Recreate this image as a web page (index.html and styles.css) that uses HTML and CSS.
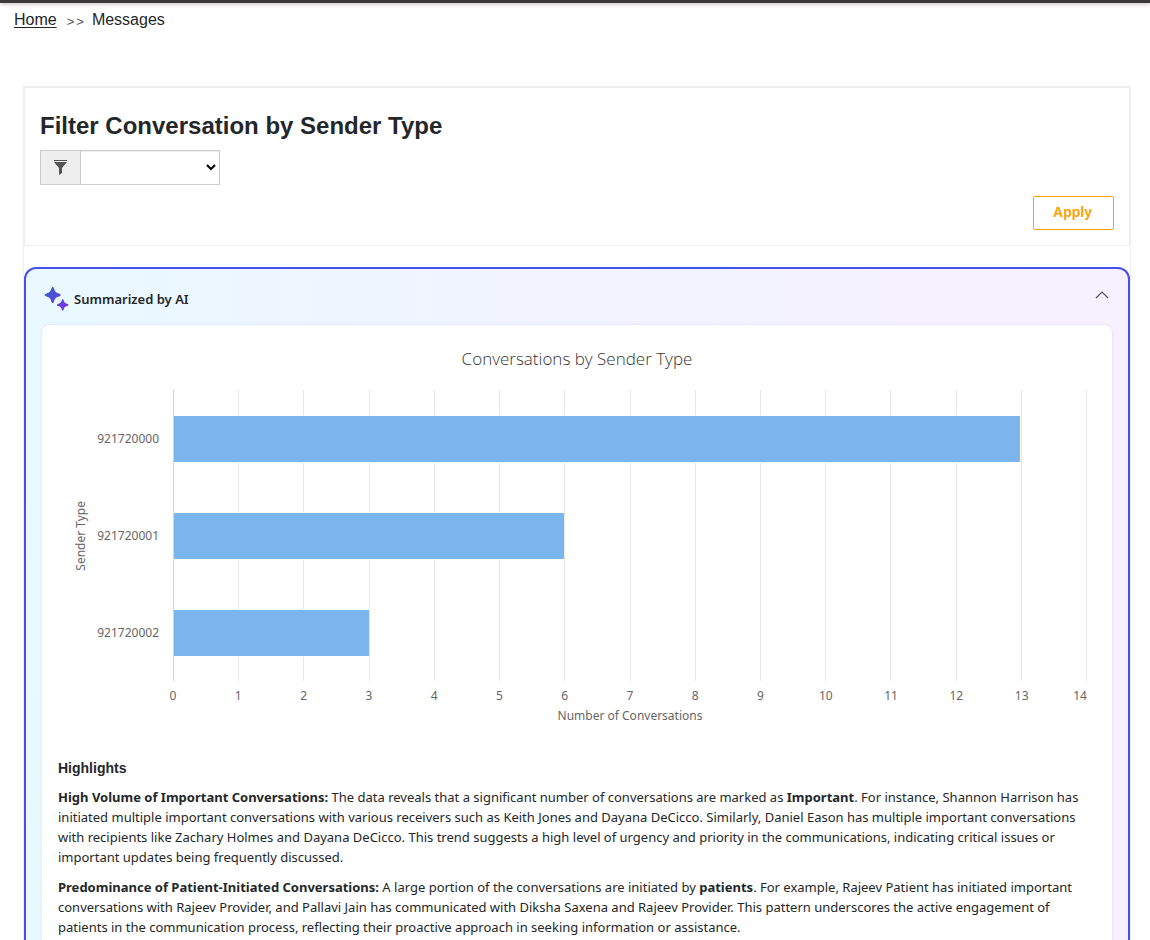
FILE: index.html
```html
<!DOCTYPE html>
<html lang="en">
<head>
<meta charset="utf-8">
<title>Messages</title>
<meta name="viewport" content="width=device-width, initial-scale=1">
<link rel="stylesheet" href="styles.css">
</head>
<body>
<header class="topbar"></header>
<nav class="breadcrumb" aria-label="Breadcrumb">
  <a class="crumb-link" href="#">Home</a>
  <span class="crumb-sep">&gt;&gt;</span>
  <span class="crumb-current">Messages</span>
</nav>
<main class="content">
  <form class="filter">
    <label class="filter-title" for="sender-type">Filter Conversation by Sender Type</label>
    <div class="select-group">
      <span class="addon">
        <svg class="funnel" viewBox="0 0 14 16" width="14" height="16" aria-hidden="true"><path fill="#555" d="M0 0h13v1H0zM0 2h13L8 8v5L5 15V8z"/></svg>
      </span>
      <select class="select" id="sender-type"><option></option><option>Patient</option><option>Provider</option></select>
    </div>
    <div class="actions"><button class="apply" type="button">Apply</button></div>
  </form>
  <section class="summary">
    <div class="summary-head">
      <svg class="sparkles" viewBox="0 0 26 26" width="26" height="26" aria-hidden="true">
        <defs><linearGradient id="spark" gradientUnits="userSpaceOnUse" x1="3" y1="3" x2="24" y2="24"><stop offset="0" stop-color="#3b5bcc"/><stop offset="1" stop-color="#7c32ea"/></linearGradient></defs>
        <path fill="url(#spark)" d="M8.700 1C9.500 1 9.700 1.600 10 2.500C11 5.500 11.600 6.300 14.800 7.500C16 7.900 16.700 8.300 16.700 9S16 10.100 14.800 10.500C11.600 11.700 11 12.500 10 15.500C9.700 16.500 9.400 17 8.700 17S7.700 16.500 7.400 15.500C6.400 12.500 5.800 11.700 2.600 10.500C1.400 10.100.7 9.700.7 9S1.400 7.900 2.600 7.500C5.800 6.300 6.400 5.500 7.400 2.500C7.700 1.600 7.900 1 8.700 1z"/>
        <path fill="url(#spark)" d="M18.700 13.300C19.300 13.300 19.500 13.800 19.700 14.500C20.300 16.500 20.900 17 23 17.700C24 18 24.500 18.400 24.500 18.900S24 19.800 23 20.100C20.900 20.800 20.300 21.400 19.700 23.400C19.500 24.100 19.300 24.600 18.700 24.600S17.900 24.100 17.700 23.400C17.100 21.400 16.500 20.800 14.400 20.100C13.400 19.800 12.900 19.400 12.900 18.900S13.400 18 14.400 17.700C16.500 17 17.100 16.500 17.700 14.500C17.900 13.800 18.100 13.300 18.700 13.300z"/>
      </svg>
      <h2 class="summary-title">Summarized by AI</h2>
      <button class="collapse" type="button" aria-label="Collapse summary">
        <svg viewBox="0 0 14 8" width="14" height="8" aria-hidden="true"><path d="M1 7l6-6 6 6" fill="none" stroke="#55565a" stroke-width="1.200"/></svg>
      </button>
    </div>
    <div class="card">
      <figure class="chart">
        <figcaption class="chart-title">Conversations by Sender Type</figcaption>
        <div class="y-title">Sender Type</div>
        <div class="y-labels"><span>921720000</span><span>921720001</span><span>921720002</span></div>
        <div class="plot">
          <div class="gridlines"><i></i><i></i><i></i><i></i><i></i><i></i><i></i><i></i><i></i><i></i><i></i><i></i><i></i><i></i></div>
          <div class="bars">
            <div class="bar" style="width:92.860%"></div>
            <div class="bar" style="width:42.860%"></div>
            <div class="bar" style="width:21.430%"></div>
          </div>
        </div>
        <div class="ticks"><span>0</span><span>1</span><span>2</span><span>3</span><span>4</span><span>5</span><span>6</span><span>7</span><span>8</span><span>9</span><span>10</span><span>11</span><span>12</span><span>13</span><span class="tick-last">14</span></div>
        <div class="x-title">Number of Conversations</div>
      </figure>
      <article class="text">
        <h3 class="text-title">Highlights</h3>
        <p><strong>High Volume of Important Conversations:</strong> The data reveals that a significant number of conversations are marked as <strong>Important</strong>. For instance, Shannon Harrison has initiated multiple important conversations with various receivers such as Keith Jones and Dayana DeCicco. Similarly, Daniel Eason has multiple important conversations with recipients like Zachary Holmes and Dayana DeCicco. This trend suggests a high level of urgency and priority in the communications, indicating critical issues or important updates being frequently discussed.</p>
        <p><strong>Predominance of Patient-Initiated Conversations:</strong> A large portion of the conversations are initiated by <strong>patients</strong>. For example, Rajeev Patient has initiated important conversations with Rajeev Provider, and Pallavi Jain has communicated with Diksha Saxena and Rajeev Provider. This pattern underscores the active engagement of patients in the communication process, reflecting their proactive approach in seeking information or assistance.</p>
      </article>
    </div>
  </section>
</main>
</body>
</html>
```

FILE: styles.css
```css
* { box-sizing: border-box; }
html { height: 100%; overflow: hidden; }
body { margin: 0; height: 100%; overflow: hidden; background: #fff; color: #242729; font-family: "Liberation Sans", Arial, sans-serif; }
.topbar { height: 3px; background: #3a3838; box-shadow: 0 1px 4px rgba(0, 0, 0, .3); }
.breadcrumb { display: flex; align-items: center; height: 34px; padding-left: 14px; font-size: 16px; }
.crumb-link { color: #212529; text-underline-offset: 2px; }
.crumb-sep { margin: 3px 6px 0 10px; font-size: 13px; letter-spacing: 2px; color: #555; }
.content { margin: 49px 19px 0 23px; border: 1px solid #eee; }
.filter { padding: 23px 15px 15px; border: 1px solid #eee; }
.filter-title { display: block; line-height: 30px; font-size: 24px; font-weight: 700; }
.select-group { display: flex; width: 180px; height: 35px; margin-top: 9px; border: 1px solid #ccc; }
.addon { display: flex; align-items: center; justify-content: center; width: 40px; background: #eee; border-right: 1px solid #ccc; }
.select { flex: 1; min-width: 0; border: 0; background: #fff; box-shadow: inset 0 1px 1px rgba(0, 0, 0, .07); color: #000; font-size: 14px; }
.actions { display: flex; justify-content: flex-end; margin-top: 11px; }
.apply { width: 81px; height: 34px; padding: 0 2px 2px 0; border: 1px solid #ffa000; border-radius: 2px; background: #fff; color: #ffa000; font: 700 14px "Liberation Sans", Arial, sans-serif; }
.summary { margin-top: 21px; padding: 0 16px 20px; border: 2px solid #4650ea; border-radius: 12px; background: linear-gradient(92deg, #e9f9ff, #eff5ff 30%, #f8f0ff); font-family: "Noto Sans", "Open Sans", sans-serif; }
.summary-head { display: flex; align-items: center; height: 56px; padding: 4px 3px 0 2px; }
.summary-title { flex: 1; margin: 0 0 0 4px; font-size: 13px; font-weight: 600; }
.collapse { display: flex; align-items: center; height: 20px; margin-bottom: 8px; padding: 0; border: 0; background: none; }
.card { padding: 0 16px 20px; border-radius: 8px; background: #fff; box-shadow: 0 0 3px rgba(90, 90, 160, .15); }
.chart { display: grid; grid-template-columns: 38px 77px 1fr 9px; grid-template-rows: 65px 291px 27px auto; margin: 0; color: #666; font-size: 12px; line-height: 16px; }
.chart-title { grid-column: 1 / -1; padding-top: 22px; color: #333; text-align: center; font: 300 17px/24px "Open Sans", sans-serif; }
.y-title { writing-mode: vertical-rl; transform: rotate(180deg); justify-self: center; align-self: center; line-height: 16px; margin-left: 8px; }
.y-labels { display: grid; grid-template-rows: repeat(3, 1fr); align-items: center; justify-items: end; padding-right: 14px; }
.plot { display: grid; }
.gridlines, .bars { grid-area: 1 / 1; }
.gridlines { display: flex; border-left: 1px solid #ccd6eb; }
.gridlines i { flex: 1; border-right: 1px solid #e6e6e6; }
.bars { display: grid; grid-template-rows: repeat(3, 1fr); align-items: center; padding: 0 2px 0 1px; }
.bar { height: 48px; background: #7cb5ec; border: solid #fff; border-width: 1px 0; }
.ticks { grid-column: 3; display: flex; width: calc(100% * 29 / 28); margin-left: calc(-100% / 28); padding-top: 7px; }
.ticks span { flex: 2; text-align: center; }
.ticks .tick-last { flex: 1; text-align: right; }
.x-title { grid-column: 3; text-align: center; margin-bottom: 34px; }
.text { font-size: 13px; line-height: 20px; }
.text-title { margin: 0 0 9px; font: 700 14px/20px "Liberation Sans", Arial, sans-serif; }
.text p { margin: 0 0 10px; }
```
